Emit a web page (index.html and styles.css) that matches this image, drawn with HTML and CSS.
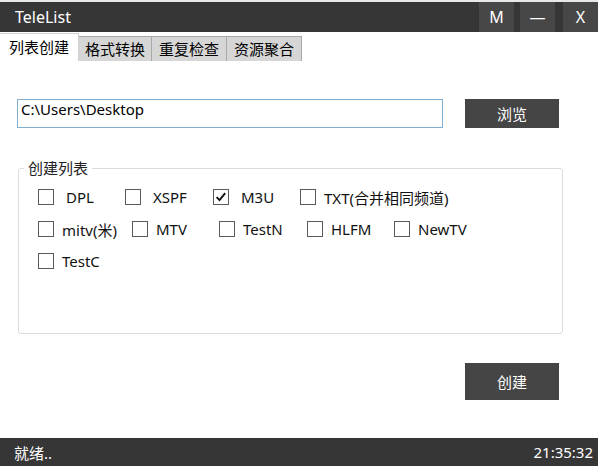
FILE: index.html
```html
<!DOCTYPE html>
<html lang="zh">
<head>
<meta charset="utf-8">
<title>TeleList</title>
<link rel="stylesheet" href="styles.css">
</head>
<body>
<div class="app">
  <div class="topstrip"></div>
  <header class="titlebar">
    <span class="title">TeleList</span>
    <div class="winbtns">
      <button class="winbtn">M</button>
      <button class="winbtn">—</button>
      <button class="winbtn winbtn-close">X</button>
    </div>
  </header>
  <nav class="tabs">
    <div class="tab tab-active">列表创建</div>
    <div class="tab tab-narrow">格式转换</div>
    <div class="tab">重复检查</div>
    <div class="tab">资源聚合</div>
  </nav>
  <main class="content">
    <div class="pathrow">
      <div class="pathinput">C:\Users\Desktop</div>
      <button class="btn btn-browse">浏览</button>
    </div>
    <section class="group">
      <span class="legend">创建列表</span>
      <div class="cbrow">
        <label class="cb w87"><span class="box"></span><span class="lbl pad">DPL</span></label>
        <label class="cb w88"><span class="box"></span><span class="lbl pad">XSPF</span></label>
        <label class="cb w87"><span class="box"><svg viewBox="0 0 16 16" width="14" height="14"><path d="M3 8.2 L6.3 11.6 L12.8 3.6" fill="none" stroke="#111" stroke-width="2.2"/></svg></span><span class="lbl pad">M3U</span></label>
        <label class="cb"><span class="box"></span><span class="lbl">TXT(合并相同频道)</span></label>
      </div>
      <div class="cbrow">
        <label class="cb w94"><span class="box"></span><span class="lbl">mitv(米)</span></label>
        <label class="cb w87"><span class="box"></span><span class="lbl">MTV</span></label>
        <label class="cb w88"><span class="box"></span><span class="lbl">TestN</span></label>
        <label class="cb w87"><span class="box"></span><span class="lbl">HLFM</span></label>
        <label class="cb"><span class="box"></span><span class="lbl">NewTV</span></label>
      </div>
      <div class="cbrow">
        <label class="cb"><span class="box"></span><span class="lbl">TestC</span></label>
      </div>
    </section>
    <div class="actionrow">
      <button class="btn btn-create">创建</button>
    </div>
  </main>
  <footer class="statusbar">
    <span>就绪..</span>
    <span>21:35:32</span>
  </footer>
</div>
</body>
</html>
```

FILE: styles.css
```css
* { box-sizing: border-box; }
html, body { margin: 0; padding: 0; }
body {
  background: #ffffff;
  font-family: "Noto Sans", "Noto Sans CJK SC", sans-serif;
  font-size: 15px;
  color: #000;
}
.app {
  width: 598px;
  height: 466px;
  display: flex;
  flex-direction: column;
  overflow: hidden;
}
.topstrip {
  height: 2px;
  background: #e9e6ec;
}
.titlebar {
  height: 30px;
  background: #363636;
  display: flex;
  align-items: center;
  justify-content: space-between;
}
.title {
  color: #fff;
  font-size: 16px;
  padding-left: 15px;
  line-height: 30px;
}
.winbtns {
  display: flex;
  height: 100%;
}
.winbtn {
  width: 35px;
  height: 100%;
  margin-left: 6px;
  border: 0;
  padding: 0;
  background: #474747;
  color: #fff;
  font-family: "Noto Sans", sans-serif;
  font-size: 16px;
}
.winbtn-close { margin-left: 8px; }
.tabs {
  display: flex;
  align-items: flex-end;
  height: 29px;
  padding-top: 1px;
}
.tab {
  width: 75px;
  height: 25px;
  line-height: 24px;
  text-align: center;
  background: #d6d6d6;
  border: 1px solid #a8a8a8;
  border-left: 0;
  border-bottom: 0;
  font-size: 15px;
  color: #000;
}
.tab-narrow { width: 73px; }
.tab-active {
  width: 79px;
  height: 28px;
  line-height: 27px;
  background: #fff;
  border: 1px solid #d0d0d0;
  border-left: 0;
  border-bottom: 0;
}
.content {
  display: flex;
  flex-direction: column;
  padding: 38px 0 0 17px;
}
.pathrow {
  display: flex;
  align-items: flex-start;
}
.pathinput {
  width: 426px;
  height: 29px;
  border: 1px solid #7fb0d3;
  padding: 0 4px 0 3px;
  line-height: 19px;
  font-size: 15px;
}
.btn {
  border: 0;
  background: #454545;
  color: #fff;
  font-family: "Noto Sans CJK SC", sans-serif;
  font-size: 15px;
  padding: 0;
}
.btn-browse {
  width: 94px;
  height: 29px;
  margin-left: 22px;
}
.group {
  position: relative;
  margin-top: 40px;
  margin-left: 1px;
  width: 545px;
  height: 166px;
  border: 1px solid #dcdcdc;
  border-radius: 3px;
  padding: 12px 0 0 19px;
}
.legend {
  position: absolute;
  left: 5px;
  top: -11px;
  padding: 0 4px;
  background: #fff;
  font-size: 15px;
  line-height: 20px;
  color: #222;
}
.cbrow {
  display: flex;
  align-items: center;
  height: 32px;
}
.cb {
  display: flex;
  align-items: center;
  gap: 8px;
}
.w87 { width: 87px; }
.w88 { width: 88px; }
.w94 { width: 94px; }
.box {
  width: 16px;
  height: 16px;
  border: 1px solid #5a5a5a;
  background: #fff;
  display: flex;
  align-items: center;
  justify-content: center;
  flex: none;
}
.lbl {
  font-size: 15px;
  white-space: nowrap;
  color: #111;
}
.pad { padding-left: 4px; }
.actionrow {
  display: flex;
  margin-top: 29px;
  padding-left: 448px;
}
.btn-create {
  width: 94px;
  height: 37px;
}
.statusbar {
  margin-top: auto;
  height: 28px;
  background: #363636;
  color: #fff;
  display: flex;
  align-items: center;
  justify-content: space-between;
  padding: 0 5px 0 14px;
  font-size: 15px;
}
```
